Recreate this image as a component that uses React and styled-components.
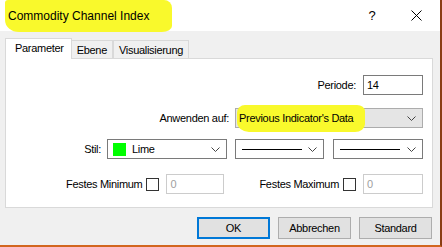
import React from 'react';
import styled, { createGlobalStyle } from 'styled-components';

const GlobalStyle = createGlobalStyle`
  html, body {
    margin: 0;
    padding: 0;
    background: #ffffff;
  }
  * {
    box-sizing: border-box;
  }
`;

const Dialog = styled.div`
  width: 442px;
  height: 247px;
  display: flex;
  flex-direction: column;
  background: #f0f0f0;
  border-right: 2px solid #8a3d14;
  border-bottom: 2px solid #d2661f;
  font-family: 'Liberation Sans', Arial, sans-serif;
  font-size: 11px;
  color: #000;
  overflow: hidden;
`;

const TitleBar = styled.div`
  height: 31px;
  flex-shrink: 0;
  display: flex;
  align-items: center;
  background: #ffffff;
  position: relative;
`;

const Title = styled.span`
  position: relative;
  margin-left: 8px;
  margin-top: 1px;
  font-size: 12px;
  z-index: 1;
`;

const Marker = styled.span`
  position: absolute;
  background: #f9f92c;
  border-radius: ${p => p.$radius || '6px'};
  z-index: 0;
`;

const CaptionButton = styled.div`
  width: 44px;
  height: 31px;
  display: flex;
  align-items: center;
  justify-content: center;
  font-size: 13px;
  margin-left: ${p => (p.$first ? 'auto' : '0')};
  margin-right: ${p => (p.$last ? '2px' : '0')};
`;

const Body = styled.div`
  flex: 1;
  padding: 7px 7px 0 5px;
  display: flex;
  flex-direction: column;
  letter-spacing: -0.3px;
`;

const Tabs = styled.div`
  display: flex;
  align-items: flex-end;
  height: 21px;
  margin-bottom: -1px;
  position: relative;
  z-index: 1;
`;

const Tab = styled.div`
  height: ${p => (p.$active ? '21px' : '18px')};
  margin-bottom: ${p => (p.$active ? '0' : '1px')};
  padding: ${p => (p.$active ? '0 7px 2px 9px' : '0 5px 0 5px')};
  display: flex;
  align-items: center;
  background: ${p => (p.$active ? '#ffffff' : '#f0f0f0')};
  border: 1px solid #d9d9d9;
  border-bottom: none;
  border-left: ${p => (p.$noLeft ? 'none' : '1px solid #d9d9d9')};
`;

const Panel = styled.div`
  height: 150px;
  background: #ffffff;
  border: 1px solid #d9d9d9;
  padding: 16px 9px 0 0;
  display: flex;
  flex-direction: column;
`;

const Row = styled.div`
  display: flex;
  justify-content: flex-end;
  align-items: center;
  height: 20px;
  margin-top: ${p => p.$top || '0px'};
`;

const Group = styled.div`
  display: flex;
  align-items: center;
  margin-left: ${p => p.$left || '0px'};
`;

const Label = styled.span`
  margin-right: ${p => p.$gap || '6px'};
  white-space: nowrap;
`;

const TextBox = styled.div`
  width: ${p => p.$w};
  height: 20px;
  display: flex;
  align-items: center;
  padding-left: 3px;
  background: #ffffff;
  border: 1px solid ${p => (p.$disabled ? '#cccccc' : '#7a7a7a')};
  color: ${p => (p.$disabled ? '#a0a0a0' : '#000')};
`;

const Select = styled.div`
  position: relative;
  width: ${p => p.$w};
  height: 20px;
  display: flex;
  align-items: center;
  padding-left: ${p => p.$pad || '3px'};
  background: ${p => (p.$grey ? '#e5e5e5' : '#ffffff')};
  border: 1px solid ${p => (p.$grey ? '#acacac' : '#7a7a7a')};
  margin-left: ${p => p.$left || '0px'};
`;

const SelectText = styled.span`
  position: relative;
  z-index: 1;
`;

const Chevron = styled.svg`
  position: absolute;
  right: 6px;
  top: 7px;
  z-index: 1;
`;

const Swatch = styled.span`
  width: 13px;
  height: 13px;
  background: #00ff00;
  margin-right: 6px;
`;

const LineSample = styled.span`
  width: 60px;
  height: 1px;
  background: #000;
`;

const CheckBox = styled.span`
  width: 13px;
  height: 13px;
  border: 1px solid #333;
  background: #fff;
  margin-right: 7px;
`;

const Buttons = styled.div`
  display: flex;
  justify-content: flex-end;
  gap: 8px;
  margin-top: 9px;
  margin-right: 1px;
`;

const Button = styled.div`
  width: 73px;
  height: 22px;
  display: flex;
  align-items: center;
  justify-content: center;
  background: #e1e1e1;
  border: ${p => (p.$default ? '2px solid #0078d7' : '1px solid #adadad')};
`;

const ChevronIcon = () => (
  <Chevron width="9" height="5" viewBox="0 0 9 5">
    <polyline points="0.5,0.5 4.5,4.5 8.5,0.5" fill="none" stroke="#444" strokeWidth="1" />
  </Chevron>
);

const App = () => (
  <>
    <GlobalStyle />
    <Dialog>
      <TitleBar>
        <Marker style={{ left: 5, top: 0, width: 167, height: 32 }} $radius="3px 8px 10px 14px / 3px 8px 6px 12px" />
        <Title>Commodity Channel Index</Title>
        <CaptionButton $first>?</CaptionButton>
        <CaptionButton $last>
          <svg width="11" height="11" viewBox="0 0 11 11">
            <path d="M0.5 0.5 L10.5 10.5 M10.5 0.5 L0.5 10.5" stroke="#000" strokeWidth="1" />
          </svg>
        </CaptionButton>
      </TitleBar>
      <Body>
        <Tabs>
          <Tab $active>Parameter</Tab>
          <Tab $noLeft>Ebene</Tab>
          <Tab>Visualisierung</Tab>
        </Tabs>
        <Panel>
          <Row>
            <Label $gap="7px">Periode:</Label>
            <TextBox $w="60px">14</TextBox>
          </Row>
          <Row $top="13px">
            <Label>Anwenden auf:</Label>
            <Select $w="188px" $grey>
              <Marker style={{ left: 1, top: -4, width: 128, height: 27 }} $radius="8px 8px 10px 12px / 8px 6px 8px 10px" />
              <SelectText>Previous Indicator's Data</SelectText>
              <ChevronIcon />
            </Select>
          </Row>
          <Row $top="11px">
            <Label>Stil:</Label>
            <Select $w="120px" $pad="5px">
              <Swatch />
              <SelectText>Lime</SelectText>
              <ChevronIcon />
            </Select>
            <Select $w="89px" $pad="6px" $left="8px">
              <LineSample />
              <ChevronIcon />
            </Select>
            <Select $w="90px" $pad="6px" $left="9px">
              <LineSample />
              <ChevronIcon />
            </Select>
          </Row>
          <Row $top="15px">
            <Group>
              <Label $gap="4px">Festes Minimum</Label>
              <CheckBox />
              <TextBox $w="58px" $disabled>0</TextBox>
            </Group>
            <Group $left="35px">
              <Label $gap="4px">Festes Maximum</Label>
              <CheckBox />
              <TextBox $w="60px" $disabled>0</TextBox>
            </Group>
          </Row>
        </Panel>
        <Buttons>
          <Button $default>OK</Button>
          <Button>Abbrechen</Button>
          <Button>Standard</Button>
        </Buttons>
      </Body>
    </Dialog>
  </>
);

export default App;
